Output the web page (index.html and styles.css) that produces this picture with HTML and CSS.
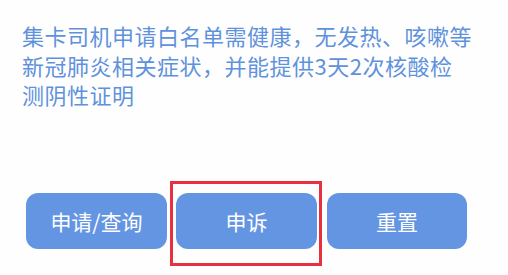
FILE: index.html
```html
<!DOCTYPE html>
<html lang="zh-CN">
<head>
<meta charset="utf-8">
<link rel="stylesheet" href="styles.css">
</head>
<body>
<div class="page">
  <p class="notice">集卡司机申请白名单需健康，无发热、咳嗽等新冠肺炎相关症状，并能提供3天2次核酸检<br>测阴性证明</p>
  <div class="actions">
    <button class="btn">申请/查询</button>
    <div class="highlight-wrap">
      <button class="btn">申诉</button>
      <span class="highlight"></span>
    </div>
    <button class="btn btn-narrow">重置</button>
  </div>
</div>
</body>
</html>
```

FILE: styles.css
```css
html, body {
  margin: 0;
  padding: 0;
  background: #fefefe;
}
.page {
  width: 508px;
  height: 275px;
  padding: 21px 0 0 22px;
  box-sizing: border-box;
  font-family: "Noto Sans CJK SC", "Noto Sans", sans-serif;
}
.notice {
  margin: 0;
  width: 470px;
  font-size: 22px;
  line-height: 29.5px;
  letter-spacing: 0.5px;
  color: #5f92dc;
}
.actions {
  display: flex;
  gap: 9px;
  margin-top: 83px;
  margin-left: 4px;
}
.btn {
  width: 141px;
  height: 56px;
  border: none;
  border-radius: 12px;
  background: #6495e3;
  color: #ffffff;
  font-family: "Noto Sans CJK SC", "Noto Sans", sans-serif;
  font-size: 21px;
  padding: 0;
}
.btn-narrow {
  width: 140px;
  margin-left: 1px;
}
.highlight-wrap {
  position: relative;
  display: flex;
}
.highlight {
  position: absolute;
  left: -6px;
  right: -5px;
  top: -12px;
  bottom: -17px;
  border: 3px solid #e8313f;
  pointer-events: none;
}
```
